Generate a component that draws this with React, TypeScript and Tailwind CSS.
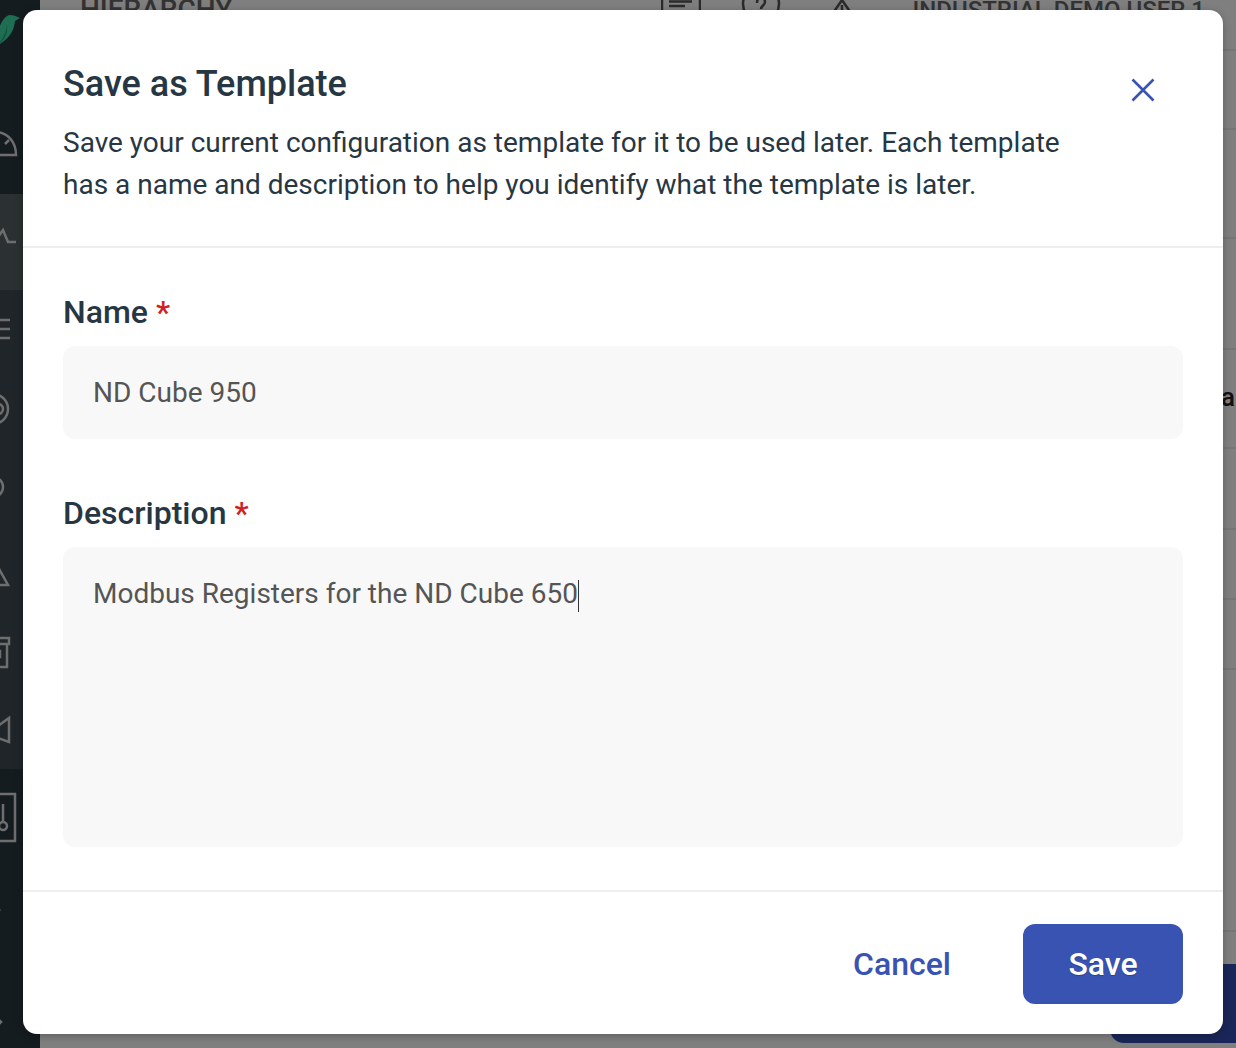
import React from "react";

const rows = [
  { height: 79 },
  { height: 109 },
  { height: 111 },
  { height: 99, label: "a" },
  { height: 81 },
  { height: 70 },
  { height: 70 },
  { height: 262 },
];

const Row: React.FC<{ height: number; label?: string }> = ({ height, label }) => (
  <div className="flex items-center justify-end border-b-2 border-[#ececec] pr-px pb-[3px]" style={{ height }}>
    {label && <span className="text-[26px] font-medium text-[#222]">{label}</span>}
  </div>
);

const SideIcon: React.FC<{ height: number; className?: string; children: React.ReactNode }> = ({
  height,
  className,
  children,
}) => (
  <div className={className} style={{ height }}>
    <svg
      width="40"
      height={height}
      viewBox={`0 0 40 ${height}`}
      fill="none"
      stroke="#dcdcdc"
      strokeWidth="2.5"
      className="block"
    >
      {children}
    </svg>
  </div>
);

const Sidebar = () => (
  <aside className="flex h-full w-10 shrink-0 flex-col bg-[#283840]">
    <SideIcon height={194}>
      <path d="M-6 47C-3 31 2 16 10 15C13 15 16 16 20 18L15 21C14 33 6 42-6 47Z" fill="#3cdca6" stroke="none" />
      <path d="M-6 47C2 42 6 34 7 25C8 34 4 42-6 47Z" fill="#2c9a80" stroke="none" />
      <path d="M-10 155H16C16 142 8 133-3 132M9 140l-4 4" />
    </SideIcon>
    <SideIcon height={96} className="bg-[#566066]">
      <path d="M-4 46L3 36 8 48H16" />
    </SideIcon>
    <div className="flex w-10 flex-col bg-[#3e4a52]">
      <SideIcon height={479}>
        <path d="M-4 30H10M-4 39H10M-4 48H10" />
        <circle cx="-7" cy="119" r="15" />
        <circle cx="-2" cy="119" r="5" />
        <circle cx="-7" cy="197" r="10" />
        <path d="M-2 277L8 295H-8" />
        <path d="M-4 348H9V354H-4M7 354V377H-4M-2 361h2v6h-2" />
        <path d="M-2 436L9 428V452L-2 448" />
      </SideIcon>
    </div>
    <SideIcon height={279}>
      <path d="M-6 25H15V72H-6M3 35V53" />
      <circle cx="3" cy="57" r="4" />
      <circle cx="-1" cy="141" r="1.5" fill="#dcdcdc" stroke="none" />
      <path d="M-1 251l2 2-2 2" />
    </SideIcon>
  </aside>
);

const MainBehind = () => (
  <main className="relative h-full min-w-0 flex-1 overflow-hidden bg-white">
    <header className="flex h-[51px] items-start border-b-2 border-[#ececec] pr-[31px] pl-[40px] text-[#666]">
      <span className="-mt-[5px] text-[28px] leading-[30px] font-medium">HIERARCHY</span>
      <div className="ml-auto flex items-start">
        <svg width="40" height="20" viewBox="0 0 40 20" fill="none" stroke="#555" strokeWidth="2.5" className="-mt-[6px]">
          <path d="M1 20V1H39V20M8 7.5H31M8 12H24" />
        </svg>
        <svg width="40" height="20" viewBox="0 0 40 20" fill="none" stroke="#555" strokeWidth="2.5" className="-mt-[6px] ml-[40px]">
          <path d="M5 0C1 6 1 14 5 20M35 0C39 6 39 14 35 20M16 9c0-7 8-7 8-1 0 3-4 4-4 7" />
        </svg>
        <svg width="26" height="20" viewBox="0 0 26 20" fill="none" stroke="#555" strokeWidth="2.5" className="-mt-[6px] ml-[48px]">
          <path d="M2 22L13 6 24 22M13 11V18" />
        </svg>
        <span className="-mt-[5px] ml-[57px] text-[24px] leading-[30px] font-medium">INDUSTRIAL DEMO USER 1</span>
      </div>
    </header>
    {rows.map((row, i) => (
      <Row key={i} height={row.height} label={row.label} />
    ))}
    <div className="absolute top-[964px] right-0 h-[79px] w-[126px] rounded-bl-[14px] bg-[#344cb2]" />
  </main>
);

const Required = () => <span className="ml-2 text-[#d0201f]">*</span>;

export default function App() {
  return (
    <div className="relative h-[1048px] w-[1236px] overflow-hidden font-['Roboto',sans-serif]">
      <div className="flex h-full">
        <Sidebar />
        <MainBehind />
      </div>

      <div className="absolute inset-0 bg-black/50 pt-[10px] pl-[23px]">
        <div className="flex h-[1024px] w-[1200px] flex-col rounded-[14px] bg-white shadow-[0_2px_8px_rgba(0,0,0,0.25)]">
          <div className="relative h-[238px] shrink-0 border-b-2 border-[#eeeeee] px-[40px] pt-[52px]">
            <h2 className="text-[36px] leading-[44px] font-medium text-[#263743]">Save as Template</h2>
            <p className="mt-[16px] w-[1040px] text-[28px] leading-[42px] text-[#263743]">
              Save your current configuration as template for it to be used later. Each template has a name and
              description to help you identify what the template is later.
            </p>
            <button className="absolute top-[68px] right-[68px]">
              <svg width="24" height="24" viewBox="0 0 24 24" fill="none" stroke="#3953b3" strokeWidth="2.6" className="block">
                <path d="M1.5 1.5L22.5 22.5M22.5 1.5L1.5 22.5" />
              </svg>
            </button>
          </div>

          <div className="flex h-[642px] shrink-0 flex-col px-[40px] pt-[43px]">
            <label className="text-[32px] leading-[42px] font-medium text-[#263743]">
              Name
              <Required />
            </label>
            <div className="mt-[13px] flex h-[93px] items-center rounded-[12px] bg-[#f8f8f8] px-[30px] text-[28px] text-[#555555]">
              ND Cube 950
            </div>
            <label className="mt-[53px] text-[32px] leading-[42px] font-medium text-[#263743]">
              Description
              <Required />
            </label>
            <div className="mt-[13px] h-[300px] rounded-[12px] bg-[#f8f8f8] px-[30px] pt-[27px] text-[28px] leading-[40px] text-[#555555]">
              Modbus Registers for the ND Cube 650
              <span className="inline-block h-[32px] w-[1.5px] bg-[#333] align-middle" />
            </div>
          </div>

          <div className="flex flex-1 items-center justify-end gap-[72px] border-t-2 border-[#eeeeee] px-[40px] pt-[2px]">
            <button className="text-[32px] font-medium text-[#3953b3]">Cancel</button>
            <button className="h-[80px] w-[160px] rounded-[12px] bg-[#3953b3] text-[32px] font-medium text-white [text-shadow:0_1px_1px_rgba(0,0,0,0.25)]">
              Save
            </button>
          </div>
        </div>
      </div>
    </div>
  );
}
